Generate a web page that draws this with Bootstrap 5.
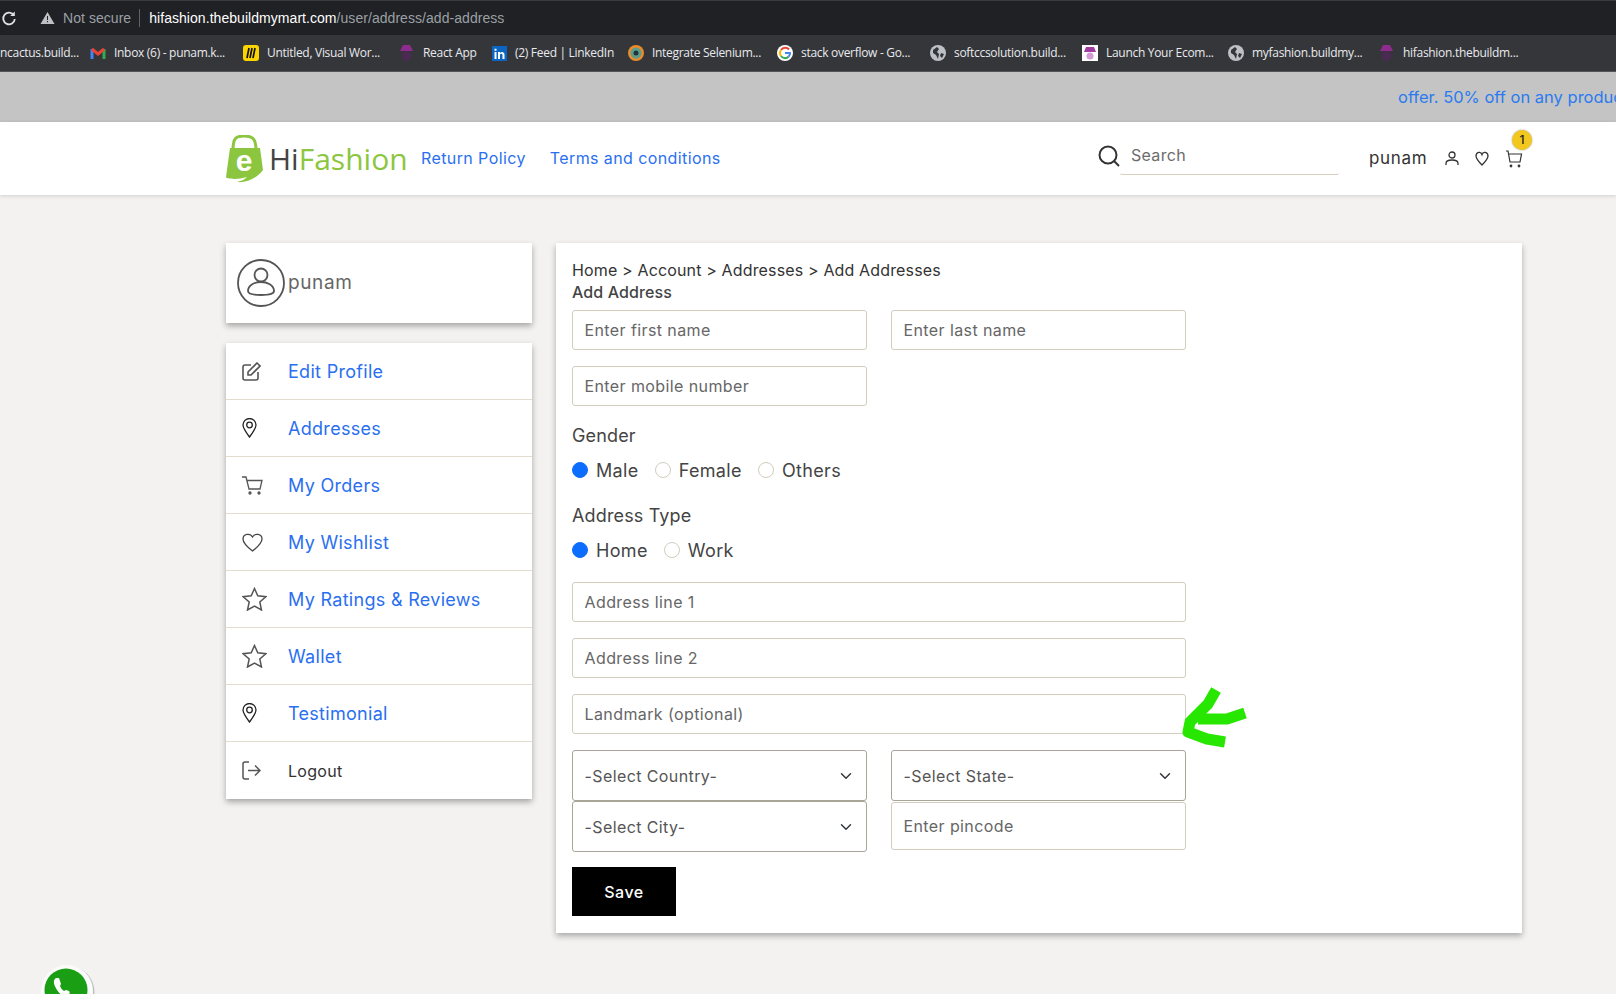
<!DOCTYPE html>
<html lang="en">
<head>
  <meta charset="UTF-8" />
  <title>HiFashion - Add Address</title>
  <link href="https://cdn.jsdelivr.net/npm/bootstrap@5.3.3/dist/css/bootstrap.min.css" rel="stylesheet">
  <style>
    html, body { height: 994px; overflow: hidden; }
    body { background: #f3f2f1; font-family: Inter, "Open Sans", sans-serif; color: #333; position: relative; }

    /* browser chrome */
    .addr-strip { height: 35px; background: #202124; border-top: 1px solid #3a3b3f; font-family: "Liberation Sans", sans-serif; font-size: 14px; letter-spacing: .05px; color: #9aa0a6; }
    .addr-reload { width: 30px; padding-left: 1px; }
    .addr-pill { height: 35px; padding-left: 10px; }
    .addr-sep { width: 1px; height: 18px; background: #5f6368; margin: 0 9px 0 8px; }
    .addr-host { color: #fff; }
    .bm-strip { height: 37px; background: #35363a; border-bottom: 1px solid #55565a; font-family: "Open Sans", sans-serif; font-size: 12px; color: #e8eaed; white-space: nowrap; overflow: hidden; letter-spacing: -.3px; }
    .bm-item { gap: 8px; flex: none; }
    .bm-item svg { flex: none; }
    .bm-first { width: 90px; }

    .offer-strip { height: 50px; background: #c4c4c4; color: #2a7bf0; font-size: 16.5px; padding-left: 1398px; white-space: nowrap; overflow: hidden; }

    /* site header */
    .site-head { height: 73px; background: #fff; box-shadow: 0 1px 4px rgba(0,0,0,.14); padding: 0 93px 0 226px; width: 1616px; }
    .logo-box { width: 195px; height: 50px; gap: 6px; flex: none; }
    .logo-box svg { flex: none; }
    .logo-text { font-family: "Open Sans", sans-serif; font-size: 30px; color: #8cc63f; line-height: 1; }
    .logo-text b { font-weight: 400; color: #444; }
    .logo-e { position: absolute; left: 226px; top: 146px; font-family: "Liberation Sans", sans-serif; font-weight: 700; font-size: 30px; color: #fff; line-height: 30px; width: 36px; text-align: center; }
    .top-link { color: #2a6ff0; font-size: 16px; letter-spacing: .4px; text-decoration: none; margin-right: 24px; padding-bottom: 1px; }
    .search-wrap { margin-left: auto; width: 241px; }
    .search-wrap svg { flex: none; margin-bottom: 5px; }
    .search-line { width: 219px; height: 32px; border-bottom: 1px solid #d6cfc0; border-radius: 2px; padding-left: 11px; padding-bottom: 6px; color: #6c6c6c; font-size: 16px; letter-spacing: .3px; }
    .head-user { margin-left: 30px; font-size: 17px; letter-spacing: .7px; color: #333; width: 76px; }
    .cart-badge { position: absolute; left: 1512px; top: 130px; width: 20px; height: 20px; border-radius: 50%; background: #f2c81e; font-size: 12px; font-weight: 500; color: #222; line-height: 20px; text-align: center; box-shadow: 0 0 2px rgba(0,0,0,.4); }

    /* page body */
    .page-wrap { margin: 48px 0 0 226px; width: 1296px; gap: 24px; }
    .side-col { width: 306px; flex: none; }
    .side-box { background: #fff; box-shadow: 0 3px 6px rgba(0,0,0,.32); }
    .side-head { height: 80px; margin-bottom: 20px; padding-left: 11px; gap: 3px; font-size: 19px; letter-spacing: .6px; color: #666; }
    .side-row { height: 57px; border-bottom: 1px solid #e4dccf; text-decoration: none; color: #2a6ff0; font-size: 18px; letter-spacing: .3px; }
    .side-row:last-child { border-bottom: 0; font-size: 16px; color: #333; }
    .side-icon { width: 62px; padding-left: 16px; flex: none; }

    .form-box { width: 966px; height: 690px; background: #fff; box-shadow: 0 3px 6px rgba(0,0,0,.3); padding: 15px 16px; font-size: 16px; }
    .crumbs { line-height: 24px; color: #333; letter-spacing: .15px; }
    .form-title { line-height: 20px; font-weight: 500; color: #444; margin-bottom: 8px; letter-spacing: .1px; }
    .field-row { width: 614px; gap: 24px; margin-bottom: 16px; }
    .half { width: 295px; flex: none; }
    .form-control.fld, .form-select.fld { height: 40px; border: 1px solid #d3ccbf; border-radius: 3px; font-size: 16px; letter-spacing: .4px; color: #555; padding-left: 11.5px; box-shadow: none; }
    .form-control.fld::placeholder { color: #666; opacity: 1; }
    .form-select.fld { height: 51px; border-color: #a8a498; }
    .form-control.pin-fld { height: 48px; margin-top: 1px; }
    .city-row { margin-bottom: 15px; }
    .group-label { font-size: 18px; color: #444; line-height: 28px; letter-spacing: .15px; }
    .radio-line { font-size: 18px; color: #444; letter-spacing: .35px; gap: 16px; height: 28px; margin: 7px 0 17px; }
    .radio-line .form-check { margin: 0; min-height: 0; padding-left: 24px; line-height: 28px; }
    .radio-line .form-check-input { width: 16px; height: 16px; margin-left: -24px; margin-top: 5px; border-color: #d3ccbf; }
    .radio-line .form-check-input:checked { background-color: #0d6efd; border-color: #0d6efd; background-image: none; }
    .save-btn { width: 104px; height: 49px; background: #000; color: #fff; font-weight: 500; border-radius: 0; font-size: 16px; letter-spacing: .5px; }

    .green-mark { position: absolute; left: 1180px; top: 680px; }
    .wa-float { position: absolute; left: 38px; top: 963px; }
  </style>
</head>
<body>

  <!-- browser bars -->
  <div class="addr-strip d-flex align-items-center">
    <div class="addr-reload d-flex">
      <svg width="16" height="16" viewBox="0 0 16 16" fill="none" stroke="#dfe1e5" stroke-width="1.8"><path d="M13 5.5A5.8 5.8 0 1 0 13.8 9"/><path d="M13.8 1.5v4.6H9.2" fill="#dfe1e5" stroke="none"/></svg>
    </div>
    <div class="addr-pill d-flex align-items-center">
      <svg class="me-2" width="15" height="14" viewBox="0 0 15 14"><path d="M7.5 1 14.5 13H.5Z" fill="#bdc1c6"/><path d="M7 5h1v4H7zM7 10h1v1.2H7z" fill="#202124"/></svg>
      <span>Not secure</span><span class="addr-sep"></span><span><span class="addr-host">hifashion.thebuildmymart.com</span>/user/address/add-address</span>
    </div>
  </div>
  <div class="bm-strip d-flex align-items-center">
    <div class="bm-first">ncactus.build...</div>
    <div class="bm-item d-flex align-items-center" style="width:153px">
      <svg width="16" height="14" viewBox="0 0 16 14" fill="none" stroke-width="3"><path d="M2 13V3" stroke="#4285f4"/><path d="M14 13V3" stroke="#34a853"/><path d="M2 3l6 5 6-5" stroke="#ea4335"/></svg>
      <span>Inbox (6) - punam.k...</span>
    </div>
    <div class="bm-item d-flex align-items-center" style="width:155px">
      <svg width="16" height="16" viewBox="0 0 16 16"><rect width="16" height="16" rx="3" fill="#fcd500"/><path d="M4 13 6 3M7 13 9 3M10 13 12 3" stroke="#111" stroke-width="1.7"/></svg>
      <span>Untitled, Visual Wor...</span>
    </div>
    <div class="bm-item d-flex align-items-center" style="width:94px">
      <svg width="17" height="18" viewBox="0 0 17 18"><path d="M5 1h7l3 6H2Z" fill="#8e2c8e"/><circle cx="8.5" cy="12" r="5" fill="#4a2a52"/></svg>
      <span>React App</span>
    </div>
    <div class="bm-item d-flex align-items-center" style="width:136px">
      <svg width="15" height="15" viewBox="0 0 15 15"><rect width="15" height="15" fill="#0a66c2"/><path d="M2.5 6h2v7h-2zM2.5 2.8h2v2h-2zM6 6h2v1c1.2-1.700 4.500-1.300 4.500 1.800V13h-2V9.200c0-1.800-2.500-1.800-2.500 0V13H6Z" fill="#fff"/></svg>
      <span>(2) Feed | LinkedIn</span>
    </div>
    <div class="bm-item d-flex align-items-center" style="width:149px">
      <svg width="16" height="16" viewBox="0 0 16 16"><circle cx="8" cy="8" r="8" fill="#e98a2b"/><circle cx="8" cy="8" r="5.500" fill="#5a9e8f"/><circle cx="8" cy="8" r="2.500" fill="#22343a"/></svg>
      <span>Integrate Selenium...</span>
    </div>
    <div class="bm-item d-flex align-items-center" style="width:153px">
      <svg width="16" height="16" viewBox="0 0 16 16"><circle cx="8" cy="8" r="8" fill="#fff"/><g fill="none" stroke-width="2"><path d="M12 4.500A5 5 0 0 0 4 5" stroke="#ea4335"/><path d="M4 5a5 5 0 0 0 0 6" stroke="#fbbc05"/><path d="M4 11a5 5 0 0 0 7.500 .8" stroke="#34a853"/><path d="M8 8h5a5 5 0 0 1-1.500 3.800" stroke="#4285f4"/></g></svg>
      <span>stack overflow - Go...</span>
    </div>
    <div class="bm-item d-flex align-items-center" style="width:152px">
      <svg width="16" height="16" viewBox="0 0 16 16"><circle cx="8" cy="8" r="8" fill="#bdc1c6"/><path d="M3 5l4-3 2 2-2 3 2 2-1 5-2-4-3-2ZM11 8l3 1-2 4-2-2Z" fill="#35363a"/></svg>
      <span>softccsolution.build...</span>
    </div>
    <div class="bm-item d-flex align-items-center" style="width:146px">
      <svg width="16" height="16" viewBox="0 0 16 16"><rect width="16" height="16" fill="#fff"/><path d="M4 2h8l2 5H2Z" fill="#a23ba2"/><circle cx="8" cy="11" r="3.500" fill="#d59ad5"/></svg>
      <span>Launch Your Ecom...</span>
    </div>
    <div class="bm-item d-flex align-items-center" style="width:150px">
      <svg width="16" height="16" viewBox="0 0 16 16"><circle cx="8" cy="8" r="8" fill="#bdc1c6"/><path d="M3 5l4-3 2 2-2 3 2 2-1 5-2-4-3-2ZM11 8l3 1-2 4-2-2Z" fill="#35363a"/></svg>
      <span>myfashion.buildmy...</span>
    </div>
    <div class="bm-item d-flex align-items-center">
      <svg width="17" height="18" viewBox="0 0 17 18"><path d="M5 1h7l3 6H2Z" fill="#8e2c8e"/><circle cx="8.5" cy="12" r="5" fill="#4a2a52"/></svg>
      <span>hifashion.thebuildm...</span>
    </div>
  </div>

  <div class="offer-strip d-flex align-items-center">offer. 50% off on any produc</div>

  <!-- site header -->
  <header class="site-head d-flex align-items-center">
    <div class="logo-box d-flex align-items-center">
      <svg width="37" height="48" viewBox="0 0 37 48"><path d="M7 15C7 3 10 1 18 1s12 2 12 14" fill="none" stroke="#8cc63f" stroke-width="3"/><path d="M4 13h30l3 22C30 44 20 48 11 47c5-1 8-3 10-5C12 45 0 44 0 42Z" fill="#8cc63f"/></svg>
      <span class="logo-text"><b>Hi</b>Fashion</span>
    </div>
    <a href="#" class="top-link">Return Policy</a>
    <a href="#" class="top-link">Terms and conditions</a>
    <div class="search-wrap d-flex align-items-center">
      <svg width="22" height="22" viewBox="0 0 22 22" fill="none" stroke="#333" stroke-width="2"><circle cx="10" cy="10" r="8.500"/><path d="m16 16 5 5"/></svg>
      <div class="search-line d-flex align-items-center">Search</div>
    </div>
    <span class="head-user">punam</span>
    <svg class="me-3" width="14" height="15" viewBox="0 0 14 15" fill="none" stroke="#333" stroke-width="1.300"><circle cx="7" cy="4" r="3"/><path d="M1 14v-1.500C1 10 3 9 7 9s6 1 6 3.500V14"/></svg>
    <svg class="me-3" width="14" height="15" viewBox="0 0 14 15" fill="none" stroke="#333" stroke-width="1.300"><path d="M7 14C3 10 1 8 1 5c0-4 5-5 6-1.500C8 0 13 1 13 5c0 3-2 5-6 9Z"/></svg>
    <svg width="18" height="18" viewBox="0 0 18 18" fill="none" stroke="#333" stroke-width="1.200"><path d="M1 1h2l2 11h10l1.500-8H4"/><circle cx="6" cy="16" r=".8"/><circle cx="14" cy="16" r=".8"/></svg>
  </header>
  <span class="logo-e">e</span>
  <span class="cart-badge">1</span>

  <!-- page -->
  <main class="page-wrap d-flex align-items-start">
    <aside class="side-col">
      <div class="side-box side-head d-flex align-items-center">
        <svg width="48" height="48" viewBox="0 0 48 48" fill="none" stroke="#555" stroke-width="1.800"><circle cx="24" cy="24" r="23"/><circle cx="24" cy="16" r="6.500"/><path d="M11 32c0-6 7-9 13-9s13 3 13 9c0 3-4 4-13 4s-13-1-13-4Z"/></svg>
        <span>punam</span>
      </div>
      <nav class="side-box d-flex flex-column">
        <a href="#" class="side-row d-flex align-items-center">
          <span class="side-icon d-flex"><svg width="19" height="19" viewBox="0 0 19 19" fill="none" stroke="#555" stroke-width="1.600"><path d="M9 3H3a2 2 0 0 0-2 2v11a2 2 0 0 0 2 2h11a2 2 0 0 0 2-2v-6"/><path d="M15 1l3 3-9 9H6v-3Z"/></svg></span>Edit Profile
        </a>
        <a href="#" class="side-row d-flex align-items-center">
          <span class="side-icon d-flex"><svg width="15" height="20" viewBox="0 0 15 20" fill="none" stroke="#222" stroke-width="1.300"><path d="M7.500 19C3 13 1 10 1 7a6.500 6.500 0 0 1 13 0c0 3-2 6-6.500 12Z"/><circle cx="7.500" cy="7" r="2.800"/></svg></span>Addresses
        </a>
        <a href="#" class="side-row d-flex align-items-center">
          <span class="side-icon d-flex"><svg width="21" height="19" viewBox="0 0 21 19" fill="none" stroke="#555" stroke-width="1.300"><path d="M0 1h4l3 12h11l2-8.500H5"/><circle cx="8" cy="17" r="1" fill="#555"/><circle cx="17" cy="17" r="1" fill="#555"/></svg></span>My Orders
        </a>
        <a href="#" class="side-row d-flex align-items-center">
          <span class="side-icon d-flex"><svg width="21" height="19" viewBox="0 0 21 19" fill="none" stroke="#444" stroke-width="1.300"><path d="M10.500 18C4 13 1 10 1 6c0-5 7-6.500 9.500-2C13-.5 20 1 20 6c0 4-3 7-9.500 12Z"/></svg></span>My Wishlist
        </a>
        <a href="#" class="side-row d-flex align-items-center">
          <span class="side-icon d-flex"><svg width="25" height="24" viewBox="0 0 25 24" fill="none" stroke="#555" stroke-width="1.500"><path d="M12.500 1.500 15.800 8.800 23.800 9.700 17.800 15 19.500 23 12.500 19 5.500 23 7.200 15 1.200 9.700 9.200 8.800Z"/></svg></span>My Ratings &amp; Reviews
        </a>
        <a href="#" class="side-row d-flex align-items-center">
          <span class="side-icon d-flex"><svg width="25" height="24" viewBox="0 0 25 24" fill="none" stroke="#555" stroke-width="1.500"><path d="M12.500 1.500 15.800 8.800 23.800 9.700 17.800 15 19.500 23 12.500 19 5.500 23 7.200 15 1.200 9.700 9.200 8.800Z"/></svg></span>Wallet
        </a>
        <a href="#" class="side-row d-flex align-items-center">
          <span class="side-icon d-flex"><svg width="15" height="20" viewBox="0 0 15 20" fill="none" stroke="#222" stroke-width="1.300"><path d="M7.500 19C3 13 1 10 1 7a6.500 6.500 0 0 1 13 0c0 3-2 6-6.500 12Z"/><circle cx="7.500" cy="7" r="2.800"/></svg></span>Testimonial
        </a>
        <a href="#" class="side-row d-flex align-items-center">
          <span class="side-icon d-flex"><svg width="19" height="19" viewBox="0 0 19 19" fill="none" stroke="#555" stroke-width="1.500"><path d="M7 1H3a2 2 0 0 0-2 2v13a2 2 0 0 0 2 2h4"/><path d="M6 9.500h12M13 4.500l5 5-5 5"/></svg></span>Logout
        </a>
      </nav>
    </aside>

    <section class="form-box">
      <div class="crumbs">Home &gt; Account &gt; Addresses &gt; Add Addresses</div>
      <div class="form-title">Add Address</div>
      <form>
        <div class="field-row d-flex">
          <input class="form-control fld half" placeholder="Enter first name">
          <input class="form-control fld half" placeholder="Enter last name">
        </div>
        <div class="field-row d-flex">
          <input class="form-control fld half" placeholder="Enter mobile number">
        </div>

        <div class="group-label">Gender</div>
        <div class="radio-line d-flex">
          <div class="form-check"><input class="form-check-input" type="radio" name="gender" checked><label class="form-check-label">Male</label></div>
          <div class="form-check"><input class="form-check-input" type="radio" name="gender"><label class="form-check-label">Female</label></div>
          <div class="form-check"><input class="form-check-input" type="radio" name="gender"><label class="form-check-label">Others</label></div>
        </div>
        <div class="group-label">Address Type</div>
        <div class="radio-line d-flex">
          <div class="form-check"><input class="form-check-input" type="radio" name="addrtype" checked><label class="form-check-label">Home</label></div>
          <div class="form-check"><input class="form-check-input" type="radio" name="addrtype"><label class="form-check-label">Work</label></div>
        </div>

        <div class="field-row"><input class="form-control fld" placeholder="Address line 1"></div>
        <div class="field-row"><input class="form-control fld" placeholder="Address line 2"></div>
        <div class="field-row"><input class="form-control fld" placeholder="Landmark (optional)"></div>

        <div class="field-row d-flex mb-0">
          <select class="form-select fld half"><option>-Select Country-</option></select>
          <select class="form-select fld half"><option>-Select State-</option></select>
        </div>
        <div class="field-row city-row d-flex align-items-start">
          <select class="form-select fld half"><option>-Select City-</option></select>
          <input class="form-control fld half pin-fld" placeholder="Enter pincode">
        </div>
        <button type="button" class="btn save-btn">Save</button>
      </form>
    </section>
  </main>

  <svg class="green-mark" width="75" height="70" viewBox="1180 680 75 70" fill="none" stroke="#27e600" stroke-width="11" stroke-linejoin="round">
    <path d="M1216 690 1208 704 1190 722 1188 732 1207 739 1225 742"/>
    <path d="M1245 713 1227 719 1198 719"/>
  </svg>

  <svg class="wa-float" width="60" height="31" viewBox="0 0 60 31">
    <circle cx="29" cy="28" r="26" fill="#8a8a8a" opacity=".5" transform="translate(1.500 1)"/>
    <circle cx="29" cy="28" r="26" fill="#fbfbfb"/>
    <circle cx="28" cy="27" r="21.500" fill="#1a9e14"/>
    <path d="M18 15c-3 2-3 6 1 12s8 7 11 5c2-1 2-3 1-4l-3-1-2 1c-2-1-3-3-4-5l1-2-2-6Z" fill="#fff"/>
  </svg>

</body>
</html>
